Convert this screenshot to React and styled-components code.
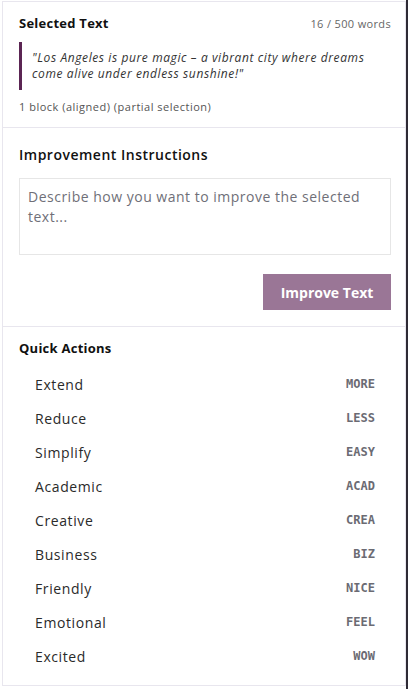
import styled, { createGlobalStyle } from "styled-components";

const GlobalStyle = createGlobalStyle`
  html, body {
    margin: 0;
    padding: 0;
    background: #ffffff;
  }
  body {
    font-family: "Open Sans", "Noto Sans", sans-serif;
    color: #1a1a1a;
  }
`;

const Frame = styled.div`
  display: flex;
  width: 408px;
  height: 689px;
  box-sizing: border-box;
  padding-left: 2px;
  border-right: 2px solid #2e2b35;
`;

const Panel = styled.div`
  flex: 1;
  display: flex;
  flex-direction: column;
  align-self: flex-start;
  margin-top: 1px;
  border: 1px solid #e8e6ee;
  border-bottom: none;
  background: #ffffff;
`;

const Section = styled.section`
  padding: ${(p) => p.$pad};
  border-bottom: 1px solid #e8e6ee;
  display: flex;
  flex-direction: column;
`;

const HeaderRow = styled.div`
  display: flex;
  justify-content: space-between;
  align-items: center;
  height: 18px;
`;

const SmallTitle = styled.h3`
  margin: 0;
  font-size: 13px;
  font-weight: 700;
  line-height: 18px;
  letter-spacing: 0.25px;
  color: #111;
`;

const Counter = styled.span`
  font-size: 11px;
  letter-spacing: 0.35px;
  color: #666;
`;

const Quote = styled.blockquote`
  margin: 10px 0 0 0;
  padding: 8px 0 8px 10px;
  border-left: 3px solid #5b2553;
  font-style: italic;
  font-size: 12px;
  line-height: 16px;
  letter-spacing: 0.6px;
  color: #333;
`;

const Meta = styled.div`
  margin-top: 9px;
  font-size: 11px;
  line-height: 16px;
  letter-spacing: 0.5px;
  color: #555;
`;

const SectionTitle = styled.h2`
  margin: 0;
  font-size: 14px;
  font-weight: 600;
  line-height: 20px;
  letter-spacing: 0.5px;
  color: #111;
`;

const TextArea = styled.textarea`
  margin-top: 13px;
  height: 77px;
  box-sizing: border-box;
  padding: 8px 8px;
  border: 1px solid #e6e6e6;
  border-radius: 0;
  resize: none;
  font-family: inherit;
  font-size: 14px;
  line-height: 20px;
  letter-spacing: 0.5px;
  color: #333;
  outline: none;

  &::placeholder {
    color: #6f6f78;
  }
`;

const ButtonRow = styled.div`
  display: flex;
  justify-content: flex-end;
  margin-top: 19px;
`;

const ImproveButton = styled.button`
  width: 128px;
  height: 36px;
  border: none;
  background: #9a7696;
  color: #fff;
  font-family: inherit;
  font-size: 14px;
  font-weight: 700;
  cursor: pointer;
`;

const ActionList = styled.ul`
  list-style: none;
  margin: 10px 0 0 0;
  padding: 0;
`;

const ActionRow = styled.li`
  display: flex;
  justify-content: space-between;
  align-items: center;
  height: 34px;
  padding: 0 16px;
  cursor: pointer;
`;

const ActionLabel = styled.span`
  font-size: 14px;
  letter-spacing: 0.6px;
  color: #2a2a2a;
`;

const ActionCode = styled.span`
  font-family: "DejaVu Sans Mono", monospace;
  font-size: 12px;
  font-weight: 700;
  color: #6b6b73;
`;

const actions = [
  ["Extend", "MORE"],
  ["Reduce", "LESS"],
  ["Simplify", "EASY"],
  ["Academic", "ACAD"],
  ["Creative", "CREA"],
  ["Business", "BIZ"],
  ["Friendly", "NICE"],
  ["Emotional", "FEEL"],
  ["Excited", "WOW"],
];

export default function App() {
  return (
    <>
      <GlobalStyle />
      <Frame>
        <Panel>
          <Section $pad="12px 14px 12px 16px">
            <HeaderRow>
              <SmallTitle>Selected Text</SmallTitle>
              <Counter>16 / 500 words</Counter>
            </HeaderRow>
            <Quote>
              "Los Angeles is pure magic – a vibrant city where dreams come
              alive under endless sunshine!"
            </Quote>
            <Meta>1 block (aligned) (partial selection)</Meta>
          </Section>
          <Section $pad="17px 14px 16px 16px">
            <SectionTitle>Improvement Instructions</SectionTitle>
            <TextArea placeholder="Describe how you want to improve the selected text..." />
            <ButtonRow>
              <ImproveButton>Improve Text</ImproveButton>
            </ButtonRow>
          </Section>
          <Section $pad="12px 14px 12px 16px">
            <SmallTitle>Quick Actions</SmallTitle>
            <ActionList>
              {actions.map(([label, code]) => (
                <ActionRow key={code}>
                  <ActionLabel>{label}</ActionLabel>
                  <ActionCode>{code}</ActionCode>
                </ActionRow>
              ))}
            </ActionList>
          </Section>
        </Panel>
      </Frame>
    </>
  );
}
